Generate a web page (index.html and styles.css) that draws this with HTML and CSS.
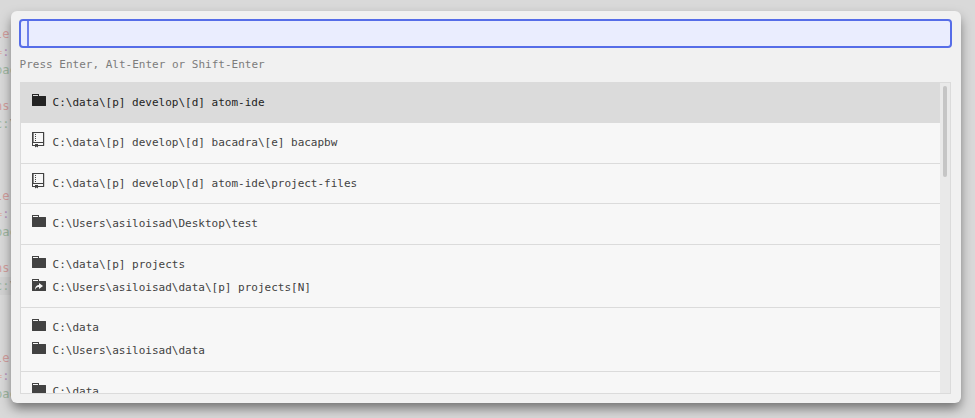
FILE: index.html
```html
<!DOCTYPE html>
<html lang="en">
<head>
<meta charset="utf-8">
<title>Project list</title>
<link rel="stylesheet" href="styles.css">
</head>
<body>
<svg class="sprite" aria-hidden="true">
  <symbol id="folder" viewBox="0 0 14 16"><path d="M13.5 4H7V2.3L6.7 2H.3L0 2.3v11.4l.3.3h13.4l.3-.3V4.3zM6 4H1V3h5z"/></symbol>
  <symbol id="linked" viewBox="0 0 14 16"><path fill-rule="evenodd" d="M13.5 4H7V2.3L6.7 2H.3L0 2.3v11.4l.3.3h13.4l.3-.3V4.3zM1 3h5v1H1V3zm6 9v-2c-.98-.02-1.84.22-2.55.7-.71.48-1.19 1.25-1.45 2.3.02-1.64.39-2.88 1.13-3.73.73-.84 1.69-1.27 2.87-1.27V6l4 3-4 3z"/></symbol>
  <symbol id="repo" viewBox="0 0 14 16"><path fill-rule="evenodd" d="M4 9H3V8h1v1zm0-3H3v1h1V6zm0-2H3v1h1V4zm0-2H3v1h1V2zm8.2-1.7v13.4l-.3.3H6v1.6l-1.5-1L3 15.6V14H.3l-.3-.3V.3L.3 0h11.6zM11 11H1v2h2v-1h3v1h5v-2zm0-10H1.6v9H11V1z"/></symbol>
</svg>
<div class="screen">
<div class="editor" aria-hidden="true">
  <pre class="code"><span class="red">le</span>
<span class="pink">=</span><span class="purple">:</span>
<span class="green">bac</span>

<span class="red">ns</span>
<span class="green">c:</span>\
</pre>
  <pre class="code"><span class="red">le</span>
<span class="pink">=</span><span class="purple">:</span>
<span class="green">bac</span>

<span class="red">ns</span>
<span class="current"><span class="green">c:</span>\</span>
</pre>
  <pre class="code"><span class="red">le</span>
<span class="pink">=</span><span class="purple">:</span>
<span class="green">bac</span>
</pre>
</div>
<main class="modal">
  <div class="query"><span class="caret"></span></div>
  <div class="hint">Press Enter, Alt-Enter or Shift-Enter</div>
  <div class="panel">
    <ol class="list">
      <li class="item selected"><div class="line"><svg class="icon"><use href="#folder"/></svg>C:\data\[p] develop\[d] atom-ide</div></li>
      <li class="item"><div class="line"><svg class="icon"><use href="#repo"/></svg>C:\data\[p] develop\[d] bacadra\[e] bacapbw</div></li>
      <li class="item"><div class="line"><svg class="icon"><use href="#repo"/></svg>C:\data\[p] develop\[d] atom-ide\project-files</div></li>
      <li class="item"><div class="line"><svg class="icon"><use href="#folder"/></svg>C:\Users\asiloisad\Desktop\test</div></li>
      <li class="item double"><div class="line"><svg class="icon"><use href="#folder"/></svg>C:\data\[p] projects</div><div class="line"><svg class="icon"><use href="#linked"/></svg>C:\Users\asiloisad\data\[p] projects[N]</div></li>
      <li class="item double"><div class="line"><svg class="icon"><use href="#folder"/></svg>C:\data</div><div class="line"><svg class="icon"><use href="#folder"/></svg>C:\Users\asiloisad\data</div></li>
      <li class="item last"><div class="line"><svg class="icon"><use href="#folder"/></svg>C:\data</div></li>
    </ol>
    <div class="track"><div class="thumb"></div></div>
  </div>
</main>
</div>
</body>
</html>
```

FILE: styles.css
```css
* { box-sizing: border-box; }
body {
  margin: 0;
  background: #d9d9d9;
  font-family: "DejaVu Sans Mono", monospace;
  font-size: 11px;
  color: #424242;
}
.sprite { display: none; }
.screen {
  position: relative;
  height: 418px;
  padding: 11px 14px 15px 11px;
  overflow: hidden;
}
.editor {
  position: absolute;
  left: -5px;
  top: 25px;
}
.code {
  margin: 0;
  height: 162px;
  font: 12px/18px "DejaVu Sans Mono", monospace;
  color: #999;
}
.code:last-child { height: 54px; }
.current { display: block; background: #d2d2d2; }
.red { color: #d4a09e; }
.pink { color: #dcb4a8; }
.purple { color: #b893bd; }
.green { color: #9fb8a1; }
.modal {
  position: relative;
  width: 950px;
  height: 392px;
  padding: 8px 9px 10px 8px;
  background: #f1f1f1;
  border-radius: 6px;
  box-shadow: 0 6px 12px -1px rgba(0, 0, 0, .5);
}
.query {
  height: 29px;
  padding: 0 6px;
  display: flex;
  background: #eaedfe;
  border: 2px solid #566de8;
  border-radius: 4px;
}
.caret { width: 2px; background: #6e80e9; }
.hint {
  height: 34px;
  padding-left: .6px;
  line-height: 34px;
  color: #7c7c7c;
}
.panel {
  height: 312px;
  margin: 0 1px;
  display: flex;
  border: 1px solid #dbdbdb;
  background: #f7f7f7;
  overflow: hidden;
}
.list {
  flex: 1;
  margin: 0;
  padding: 0;
  list-style: none;
}
.item {
  height: 40.4px;
  padding: 8px 11px 0;
  border-bottom: 1px solid #dbdbdb;
}
.item.double { height: 63.5px; }
.item.last { height: 21px; border-bottom: 0; }
.selected { background: #dbdbdb; color: #232323; }
.line {
  height: 23px;
  line-height: 23px;
  display: flex;
  white-space: pre;
}
.icon {
  width: 14px;
  height: 16px;
  margin: 1px 6.6px 0 0;
  fill: currentColor;
}
.track {
  width: 10px;
  padding: 3px;
  background: #e9e9e9;
}
.thumb {
  width: 4px;
  height: 91px;
  border-radius: 2px;
  background: #c5c5c5;
}
```
